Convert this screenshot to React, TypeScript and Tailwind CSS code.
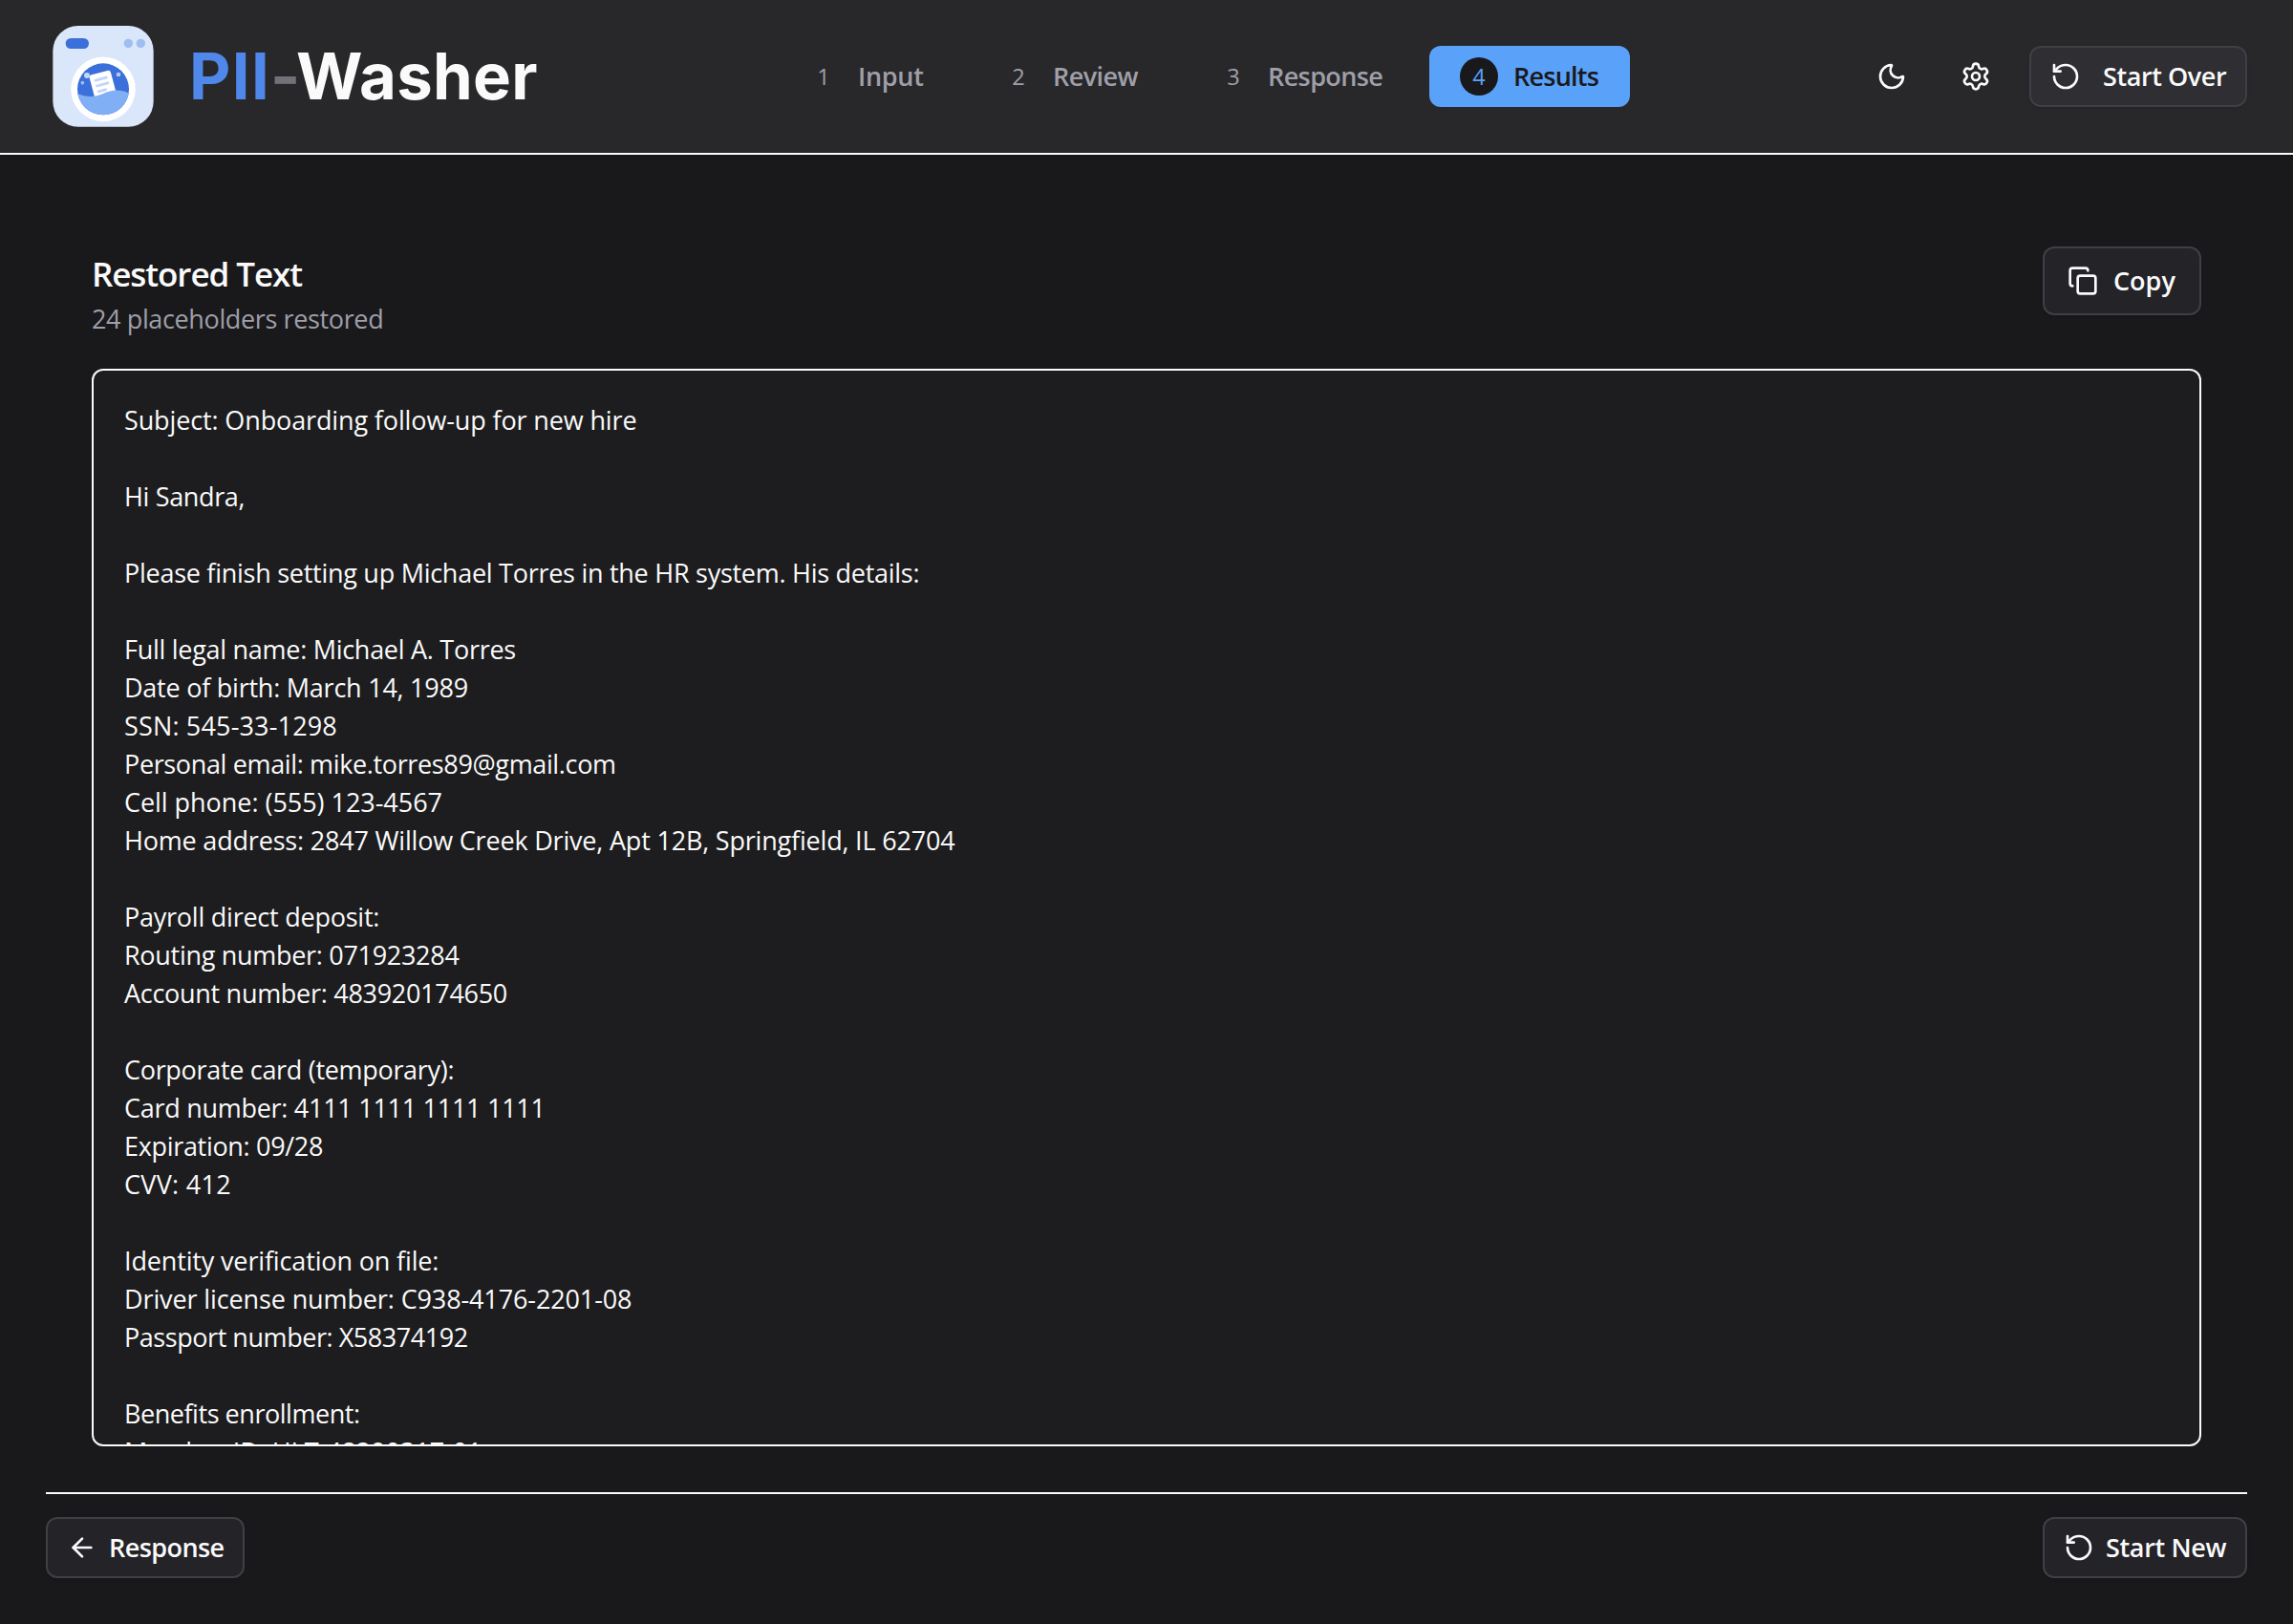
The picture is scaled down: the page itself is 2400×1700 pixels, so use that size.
import type { ReactNode } from 'react';
import { ArrowLeft, Copy, Moon, RotateCcw, Settings } from 'lucide-react';

type Line = { text: string; tracking: string };

const lines: Line[] = [
  { text: 'Subject: Onboarding follow-up for new hire', tracking: 'tracking-[-0.13px]' },
  { text: '', tracking: '' },
  { text: 'Hi Sandra,', tracking: 'tracking-[-0.35px]' },
  { text: '', tracking: '' },
  { text: 'Please finish setting up Michael Torres in the HR system. His details:', tracking: 'tracking-[-0.27px]' },
  { text: '', tracking: '' },
  { text: 'Full legal name: Michael A. Torres', tracking: 'tracking-[-0.28px]' },
  { text: 'Date of birth: March 14, 1989', tracking: 'tracking-[-0.24px]' },
  { text: 'SSN: 545-33-1298', tracking: 'tracking-[0.16px]' },
  { text: 'Personal email: mike.torres89@gmail.com', tracking: 'tracking-[-0.36px]' },
  { text: 'Cell phone: (555) 123-4567', tracking: 'tracking-[-0.04px]' },
  { text: 'Home address: 2847 Willow Creek Drive, Apt 12B, Springfield, IL 62704', tracking: 'tracking-[-0.19px]' },
  { text: '', tracking: '' },
  { text: 'Payroll direct deposit:', tracking: 'tracking-[-0.24px]' },
  { text: 'Routing number: 071923284', tracking: 'tracking-[-0.3px]' },
  { text: 'Account number: 483920174650', tracking: 'tracking-[-0.29px]' },
  { text: '', tracking: '' },
  { text: 'Corporate card (temporary):', tracking: 'tracking-[-0.31px]' },
  { text: 'Card number: 4111 1111 1111 1111', tracking: 'tracking-[-0.28px]' },
  { text: 'Expiration: 09/28', tracking: 'tracking-[-0.32px]' },
  { text: 'CVV: 412', tracking: 'tracking-[0.3px]' },
  { text: '', tracking: '' },
  { text: 'Identity verification on file:', tracking: 'tracking-[-0.15px]' },
  { text: 'Driver license number: C938-4176-2201-08', tracking: 'tracking-[-0.12px]' },
  { text: 'Passport number: X58374192', tracking: 'tracking-[-0.45px]' },
  { text: '', tracking: '' },
  { text: 'Benefits enrollment:', tracking: 'tracking-[-0.46px]' },
  { text: 'Member ID: HLT-48290317-01', tracking: 'tracking-[-0.06px]' },
];

function Logo() {
  return (
    <svg viewBox="24 30 360 360" className="size-[120px] shrink-0" aria-hidden="true">
      <defs>
        <clipPath id="drum">
          <circle cx="204" cy="250" r="81" />
        </clipPath>
      </defs>
      <rect x="46" y="51" width="316" height="317" rx="79" fill="#dae6f9" />
      <rect x="86" y="90" width="73" height="33" rx="16.5" fill="#3b6fd9" />
      <circle cx="283" cy="106" r="14" fill="#9fbdf0" />
      <circle cx="322" cy="106" r="14" fill="#9fbdf0" />
      <circle cx="204" cy="250" r="101.5" fill="#fff" />
      <g clipPath="url(#drum)">
        <rect x="120" y="165" width="170" height="170" fill="#3b6fd9" />
        <circle cx="153" cy="207" r="9" fill="#c6d7f6" />
        <circle cx="252" cy="204" r="7" fill="#b4caf3" />
        <circle cx="139" cy="230" r="5.5" fill="#a3bef0" />
        <g transform="rotate(-15 203 240)">
          <rect x="169" y="197" width="69" height="90" rx="9" fill="#fff" />
          <rect x="181" y="213" width="44" height="8.5" rx="4.25" fill="#c3d6f7" />
          <rect x="181" y="231" width="44" height="8.5" rx="4.25" fill="#c3d6f7" />
          <rect x="181" y="249" width="32" height="8.5" rx="4.25" fill="#c3d6f7" />
        </g>
        <path d="M118 262C150 276 176 277 204 264S262 249 290 266V335H118Z" fill="#80aff5" />
      </g>
    </svg>
  );
}

function Step({ n, label, className, text }: { n: number; label: string; className: string; text: string }) {
  return (
    <button className={`flex h-16 items-center rounded-xl text-[#9f9fa9] ${className}`}>
      <span className="flex size-10 shrink-0 items-center justify-center text-[23.5px] leading-10 font-medium">{n}</span>
      <span className={`ml-4 text-[27px] leading-10 font-semibold ${text}`}>{label}</span>
    </button>
  );
}

function OutlineButton({ className, children }: { className: string; children: ReactNode }) {
  return (
    <button
      className={`flex items-center rounded-xl border-2 border-[#3f3f46] text-[27px] leading-10 font-semibold whitespace-nowrap text-[#fafafa] shadow-sm ${className}`}
    >
      {children}
    </button>
  );
}

export default function App() {
  return (
    <div className="flex h-[1700px] w-[2400px] flex-col overflow-hidden bg-[#19191b] font-['Open_Sans',sans-serif] text-[#fafafa]">
      <header className="flex h-[162px] shrink-0 items-center border-b-2 border-[#fafafa] bg-[#28282a] px-12 shadow-sm">
        <div className="flex w-[761px] items-center">
          <Logo />
          <h1 className="ml-[30px] flex font-['Inter',sans-serif] text-[67px] leading-[80px] font-bold whitespace-nowrap">
            <span className="w-[85px] tracking-[1.4px] text-[#4f87ea]">PII</span>
            <span className="w-[27px] text-[#71717a]">-</span>
            <span className="tracking-[0.3px]">Washer</span>
          </h1>
        </div>
        <nav className="flex gap-4">
          <Step n={1} label="Input" className="w-[189px] pl-[33px]" text="tracking-[-0.3px]" />
          <Step n={2} label="Review" className="w-[209px] pl-8" text="tracking-[-0.55px]" />
          <Step n={3} label="Response" className="w-[241px] pl-8" text="tracking-[-0.6px]" />
          <button className="flex h-16 w-[210px] items-center rounded-xl bg-[#5aa1f9] pl-8 text-[#19191b]">
            <span className="flex size-10 items-center justify-center rounded-full bg-[#19191b] text-[23.5px] leading-10 font-medium text-[#5aa1f9]">
              4
            </span>
            <span className="ml-4 text-[27px] leading-10 font-semibold tracking-[-0.75px]">Results</span>
          </button>
        </nav>
        <div className="ml-auto flex items-center gap-6">
          <button className="flex size-16 items-center justify-center">
            <Moon className="size-8" />
          </button>
          <button className="flex size-16 items-center justify-center">
            <Settings className="size-8" />
          </button>
          <OutlineButton className="h-16 w-[228px] bg-[#2f2e33] pl-5 tracking-[-0.42px]">
            <RotateCcw className="mr-[23px] size-8 shrink-0" />
            Start Over
          </OutlineButton>
        </div>
      </header>

      <main className="flex min-h-0 flex-1 flex-col px-12 pt-24">
        <section className="flex flex-col px-12">
          <div className="flex items-start justify-between">
            <div>
              <h2 className="pt-px text-[35px] leading-[55px] font-semibold tracking-[-1.08px]">Restored Text</h2>
              <p className="text-[27px] leading-10 tracking-[-0.37px] text-[#9f9fa9]">24 placeholders restored</p>
            </div>
            <OutlineButton className="h-[72px] w-[166px] bg-[#242328] pl-6">
              <Copy className="mr-4 size-8 shrink-0" />
              Copy
            </OutlineButton>
          </div>
          <div className="mt-8 h-[1128px] overflow-hidden rounded-xl border-2 border-[#fafafa] bg-[#1d1d1f] py-8 pl-8 text-[27px] leading-10 whitespace-pre">
            {lines.map((line, i) => (
              <div key={i} className={`h-10 ${line.tracking}`}>
                {line.text}
              </div>
            ))}
          </div>
        </section>

        <footer className="mt-12 flex justify-between border-t-2 border-[#fafafa] pt-6">
          <OutlineButton className="h-16 w-[208px] bg-[#242328] pl-5 tracking-[-0.57px]">
            <ArrowLeft className="mr-3 size-8 shrink-0" />
            Response
          </OutlineButton>
          <OutlineButton className="h-16 w-[214px] bg-[#242328] pl-5 tracking-[-0.35px]">
            <RotateCcw className="mr-3 size-8 shrink-0" />
            Start New
          </OutlineButton>
        </footer>
      </main>
    </div>
  );
}
